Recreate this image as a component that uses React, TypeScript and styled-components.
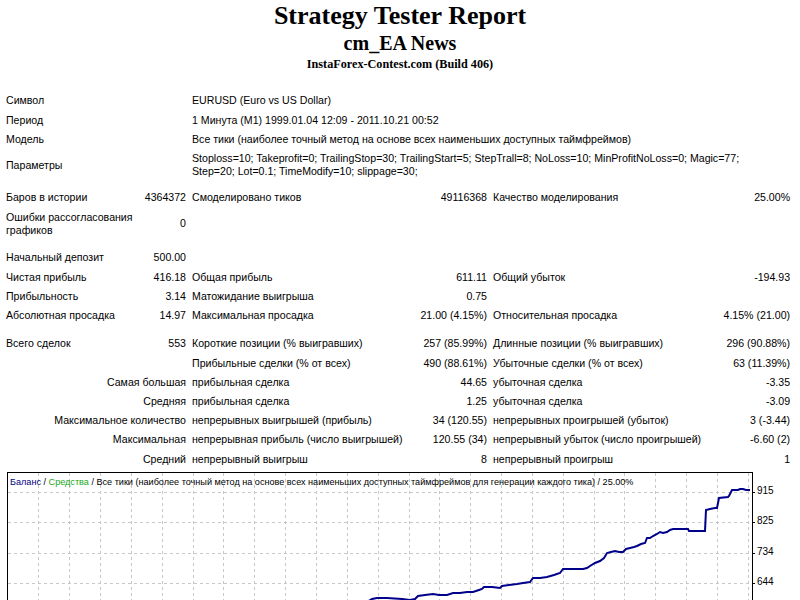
import React from 'react';
import styled, { createGlobalStyle } from 'styled-components';

const GlobalStyle = createGlobalStyle`
  html, body { margin: 0; padding: 0; background: #ffffff; }
  body {
    font-family: "Liberation Sans", Arial, sans-serif;
    font-size: 10.6px;
    color: #000000;
  }
`;

const Page = styled.div`
  width: 800px;
  overflow: hidden;
`;

const Header = styled.header`
  display: flex;
  flex-direction: column;
  align-items: center;
  font-family: "Liberation Serif", "Times New Roman", serif;
  font-weight: bold;
  color: #000;
`;

const HeadLine = styled.div<{ $size: number; $lh: number }>`
  font-size: ${(p) => p.$size}px;
  line-height: ${(p) => p.$lh}px;
  white-space: nowrap;
`;

const Table = styled.table`
  margin: 17.4px 0 0 3px;
  width: 790px;
  table-layout: fixed;
  border-collapse: collapse;
`;

const Cell = styled.td<{ $align?: 'left' | 'right'; $wrap?: boolean }>`
  padding: 3px 3px;
  line-height: 13.2px;
  text-align: ${(p) => p.$align ?? 'left'};
  vertical-align: middle;
  white-space: ${(p) => (p.$wrap ? 'normal' : 'nowrap')};
`;

const SpacerCell = styled.td<{ $h: number }>`
  padding: 0;
  height: ${(p) => p.$h}px;
`;

const ChartWrap = styled.div`
  margin: 3.2px 0 0 7px;
`;

const ChartSvg = styled.svg`
  display: block;
  font-family: "Liberation Sans", Arial, sans-serif;
`;

type Six = [string, string, string, string, string, string];

const Spacer = ({ h }: { h: number }) => (
  <tr>
    <SpacerCell colSpan={6} $h={h} />
  </tr>
);

const InfoRow = ({ label, value }: { label: string; value: React.ReactNode }) => (
  <tr>
    <Cell colSpan={2}>{label}</Cell>
    <Cell colSpan={4}>{value}</Cell>
  </tr>
);

const StatRow = ({ c }: { c: Six }) => (
  <tr>
    <Cell>{c[0]}</Cell>
    <Cell $align="right">{c[1]}</Cell>
    <Cell>{c[2]}</Cell>
    <Cell $align="right">{c[3]}</Cell>
    <Cell>{c[4]}</Cell>
    <Cell $align="right">{c[5]}</Cell>
  </tr>
);

const TradeRow = ({ c }: { c: [string, string, string, string, string] }) => (
  <tr>
    <Cell colSpan={2} $align="right">{c[0]}</Cell>
    <Cell>{c[1]}</Cell>
    <Cell $align="right">{c[2]}</Cell>
    <Cell>{c[3]}</Cell>
    <Cell $align="right">{c[4]}</Cell>
  </tr>
);

const curve: [number, number][] = [
  [2, 296], [40, 282], [90, 262], [140, 236], [190, 212], [240, 186], [290, 160], [330, 142],
  [360, 130], [365, 127], [370, 126], [380, 126], [395, 127], [403, 128], [408, 127], [411, 124],
  [418, 123], [426, 122], [432, 123], [440, 123], [446, 121], [453, 121], [460, 120], [466, 120],
  [472, 118], [475, 117], [477, 115], [485, 115], [493, 116], [495, 114], [502, 113], [510, 112],
  [516, 111], [523, 110], [526, 106], [533, 106], [540, 105], [547, 103], [553, 101], [556, 97],
  [566, 97], [576, 97], [580, 96], [583, 94], [588, 91], [593, 89], [597, 86], [600, 81],
  [604, 80], [608, 79], [612, 80], [616, 80], [619, 77], [623, 76], [627, 75], [630, 74],
  [634, 72], [638, 71], [640, 66], [643, 66], [646, 64], [650, 62], [653, 60], [656, 61],
  [660, 60], [663, 58], [666, 57], [681, 57], [682, 59], [698, 59], [699, 38], [703, 37],
  [708, 36], [710, 36], [712, 26], [721, 25], [722, 24], [725, 18], [731, 18], [733, 17],
  [736, 17], [739, 18], [743, 18],
];

const linePath = (pts: [number, number][]) =>
  pts.map(([x, y], i) => `${i === 0 ? 'M' : 'L'}${x} ${y}`).join(' ');

const VIEW_H = 128;
const BOX_W = 745;
const BOX_H = 300;
const vLines = Array.from({ length: 24 }, (_, k) => 31.3 + 30.85 * k).filter((x) => x < BOX_W - 2);
const hLines = Array.from({ length: 4 }, (_, k) => 19.5 + 30.5 * k);
const axisLabels = ['915', '825', '734', '644'];

const BalanceChart = () => (
  <ChartSvg width={790} height={VIEW_H} viewBox={`0 0 790 ${VIEW_H}`}>
    <rect x={0.5} y={0.5} width={BOX_W} height={BOX_H} fill="#ffffff" stroke="#000000" strokeWidth={1} />
    {vLines.map((x) => (
      <line key={`v${x}`} x1={Math.round(x) + 0.5} y1={1} x2={Math.round(x) + 0.5} y2={VIEW_H} stroke="#c8c8c8" strokeDasharray="3 3" />
    ))}
    {hLines.map((y) => (
      <line key={`h${y}`} x1={1} y1={Math.round(y) + 0.5} x2={BOX_W} y2={Math.round(y) + 0.5} stroke="#c8c8c8" strokeDasharray="3 3" />
    ))}
    {hLines.map((y, i) => (
      <g key={`a${y}`}>
        <line x1={BOX_W} y1={Math.round(y) + 0.5} x2={BOX_W + 3} y2={Math.round(y) + 0.5} stroke="#000" />
        <text x={750} y={Math.round(y) + 2} fontSize={10} fill="#000">{axisLabels[i]}</text>
      </g>
    ))}
    <path d={linePath(curve)} fill="none" stroke="#00008b" strokeWidth={2} strokeLinejoin="miter" />
    <text x={3} y={12.5} fontSize={9.1} fill="#000">
      <tspan fill="#000080">Баланс</tspan>
      <tspan> / </tspan>
      <tspan fill="#18a818">Средства</tspan>
      <tspan> / Все тики (наиболее точный метод на основе всех наименьших доступных таймфреймов для генерации каждого тика) / 25.00%</tspan>
    </text>
  </ChartSvg>
);

export default function App() {
  return (
    <Page>
      <GlobalStyle />
      <Header>
        <HeadLine $size={26} $lh={32}>Strategy Tester Report</HeadLine>
        <HeadLine $size={20} $lh={22}>cm_EA News</HeadLine>
        <HeadLine $size={12.2} $lh={20}>InstaForex-Contest.com (Build 406)</HeadLine>
      </Header>
      <Table>
        <colgroup>
          <col style={{ width: 137 }} />
          <col style={{ width: 49 }} />
          <col style={{ width: 226 }} />
          <col style={{ width: 75 }} />
          <col style={{ width: 225 }} />
          <col style={{ width: 78 }} />
        </colgroup>
        <tbody>
          <InfoRow label="Символ" value="EURUSD (Euro vs US Dollar)" />
          <InfoRow label="Период" value="1 Минута (M1) 1999.01.04 12:09 - 2011.10.21 00:52" />
          <InfoRow label="Модель" value="Все тики (наиболее точный метод на основе всех наименьших доступных таймфреймов)" />
          <InfoRow
            label="Параметры"
            value={
              <>
                Stoploss=10; Takeprofit=0; TrailingStop=30; TrailingStart=5; StepTrall=8; NoLoss=10; MinProfitNoLoss=0; Magic=77;
                <br />
                Step=20; Lot=0.1; TimeModify=10; slippage=30;
              </>
            }
          />
          <Spacer h={7} />
          <StatRow c={['Баров в истории', '4364372', 'Смоделировано тиков', '49116368', 'Качество моделирования', '25.00%']} />
          <tr>
            <Cell>
              Ошибки рассогласования
              <br />
              графиков
            </Cell>
            <Cell $align="right">0</Cell>
            <Cell colSpan={4} />
          </tr>
          <Spacer h={8.4} />
          <tr>
            <Cell>Начальный депозит</Cell>
            <Cell $align="right">500.00</Cell>
            <Cell colSpan={4} />
          </tr>
          <StatRow c={['Чистая прибыль', '416.18', 'Общая прибыль', '611.11', 'Общий убыток', '-194.93']} />
          <StatRow c={['Прибыльность', '3.14', 'Матожидание выигрыша', '0.75', '', '']} />
          <StatRow c={['Абсолютная просадка', '14.97', 'Максимальная просадка', '21.00 (4.15%)', 'Относительная просадка', '4.15% (21.00)']} />
          <Spacer h={9.2} />
          <StatRow c={['Всего сделок', '553', 'Короткие позиции (% выигравших)', '257 (85.99%)', 'Длинные позиции (% выигравших)', '296 (90.88%)']} />
          <TradeRow c={['', 'Прибыльные сделки (% от всех)', '490 (88.61%)', 'Убыточные сделки (% от всех)', '63 (11.39%)']} />
          <TradeRow c={['Самая большая', 'прибыльная сделка', '44.65', 'убыточная сделка', '-3.35']} />
          <TradeRow c={['Средняя', 'прибыльная сделка', '1.25', 'убыточная сделка', '-3.09']} />
          <TradeRow c={['Максимальное количество', 'непрерывных выигрышей (прибыль)', '34 (120.55)', 'непрерывных проигрышей (убыток)', '3 (-3.44)']} />
          <TradeRow c={['Максимальная', 'непрерывная прибыль (число выигрышей)', '120.55 (34)', 'непрерывный убыток (число проигрышей)', '-6.60 (2)']} />
          <TradeRow c={['Средний', 'непрерывный выигрыш', '8', 'непрерывный проигрыш', '1']} />
        </tbody>
      </Table>
      <ChartWrap>
        <BalanceChart />
      </ChartWrap>
    </Page>
  );
}
